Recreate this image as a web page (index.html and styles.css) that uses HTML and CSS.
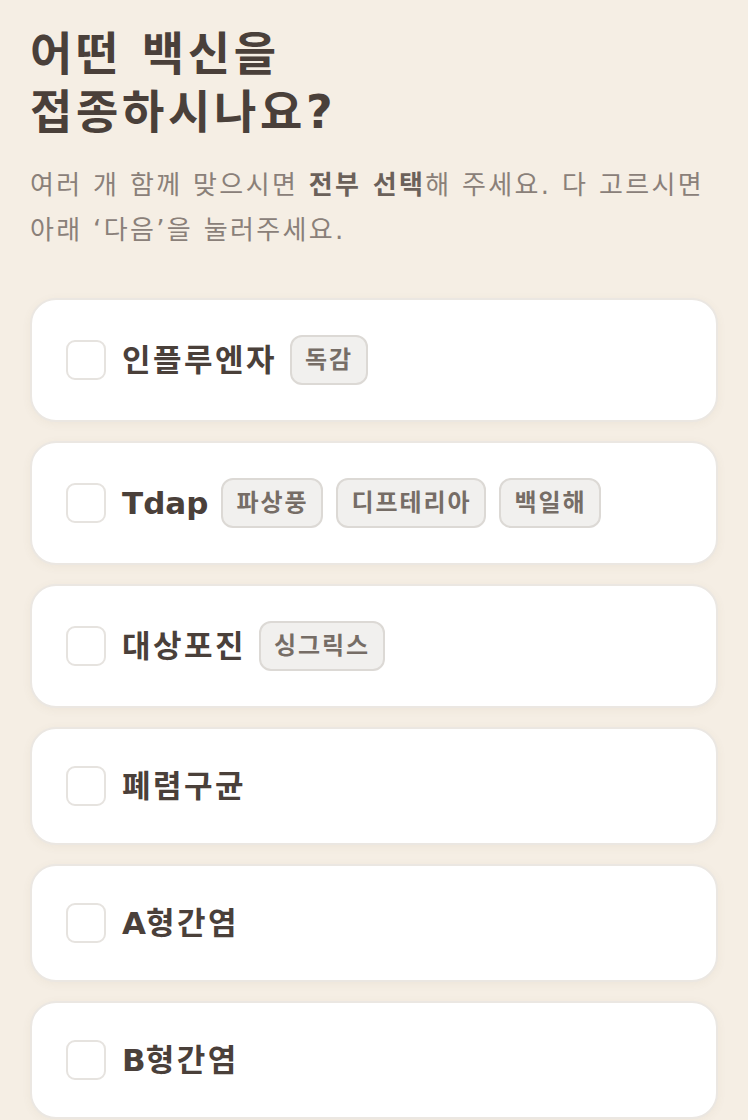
FILE: index.html
```html
<!DOCTYPE html>
<html lang="ko">
<head>
    <meta charset="UTF-8">
    <meta name="viewport" content="width=device-width, initial-scale=1.0">
    <title>백신 선택</title>
    <link rel="stylesheet" href="styles.css">
</head>
<body>
    <div class="page">
        <h1 class="title">어떤 백신을<br>접종하시나요?</h1>
        <p class="desc">여러 개 함께 맞으시면 <b>전부 선택</b>해 주세요. 다 고르시면 아래 ‘다음’을 눌러주세요.</p>

        <div class="list">
            <label class="card">
                <span class="check"></span>
                <span class="name">인플루엔자</span>
                <span class="tag">독감</span>
            </label>
            <label class="card">
                <span class="check"></span>
                <span class="name"><span class="en">Tdap</span></span>
                <span class="tag">파상풍</span>
                <span class="tag">디프테리아</span>
                <span class="tag">백일해</span>
            </label>
            <label class="card">
                <span class="check"></span>
                <span class="name">대상포진</span>
                <span class="tag">싱그릭스</span>
            </label>
            <label class="card">
                <span class="check"></span>
                <span class="name">폐렴구균</span>
            </label>
            <label class="card">
                <span class="check"></span>
                <span class="name"><span class="en">A</span>형간염</span>
            </label>
            <label class="card">
                <span class="check"></span>
                <span class="name"><span class="en">B</span>형간염</span>
            </label>
        </div>
    </div>
</body>
</html>
```

FILE: styles.css
```css
body {
    margin: 0;
    background-color: #f5eee4;
    font-family: "DejaVu Sans", "Noto Sans CJK KR", sans-serif;
    color: #4a413b;
}
.page {
    padding: 25px 30px 40px;
}
.title {
    margin: 0;
    font-size: 46px;
    line-height: 58px;
    font-weight: bold;
    letter-spacing: 0.08em;
    color: #4a403a;
}
.desc {
    margin: 22px 0 0;
    font-size: 26px;
    line-height: 45px;
    letter-spacing: 0.09em;
    color: #8a8079;
}
.desc b {
    color: #6b615a;
}
.list {
    display: flex;
    flex-direction: column;
    gap: 19px;
    margin-top: 45px;
}
.card {
    display: flex;
    align-items: center;
    gap: 13px;
    min-height: 44px;
    padding: 35px 34px;
    background: #ffffff;
    border: 2px solid #ebe7e2;
    border-radius: 26px;
    box-shadow: 0 2px 10px rgba(120, 100, 70, 0.06);
}
.check {
    flex: none;
    width: 36px;
    height: 36px;
    margin-right: 3px;
    border: 2px solid #e6e3df;
    border-radius: 9px;
    background: #fff;
}
.name {
    font-size: 31px;
    line-height: 44px;
    font-weight: bold;
    letter-spacing: 0.08em;
    color: #4a403a;
}
.en {
    letter-spacing: 0;
}
.tag {
    padding: 8px 13px;
    font-size: 24px;
    line-height: 30px;
    font-weight: bold;
    letter-spacing: 0.08em;
    color: #766d66;
    background: #f1f0ee;
    border: 2px solid #dcd9d5;
    border-radius: 12px;
}
```
